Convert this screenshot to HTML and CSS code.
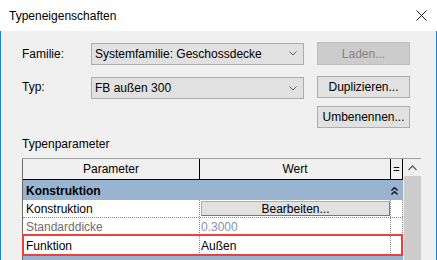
FILE: index.html
```html
<!DOCTYPE html>
<html lang="de">
    <head>
        <meta charset="UTF-8" />
        <title>Typeneigenschaften</title>
        <link rel="stylesheet" href="styles.css">
    </head>
    <body>
        <div class="dialog">
            <div class="titlebar">
                <span>Typeneigenschaften</span>
                <svg class="close" width="11" height="11" viewBox="0 0 11 11">
                    <path d="M0.5 0.5 L10.5 10.5 M10.5 0.5 L0.5 10.5" stroke="#1a1a1a" stroke-width="1" fill="none"/>
                </svg>
            </div>
            <div class="content">
                <div class="row first">
                    <span class="label">Familie:</span>
                    <div class="select">
                        <span>Systemfamilie: Geschossdecke</span>
                        <svg width="8" height="5" viewBox="0 0 8 5"><path d="M0.5 0.5 L4 4 L7.5 0.5" stroke="#606060" fill="none"/></svg>
                    </div>
                    <div class="btn disabled">Laden...</div>
                </div>
                <div class="row second">
                    <span class="label">Typ:</span>
                    <div class="select">
                        <span>FB außen 300</span>
                        <svg width="8" height="5" viewBox="0 0 8 5"><path d="M0.5 0.5 L4 4 L7.5 0.5" stroke="#606060" fill="none"/></svg>
                    </div>
                    <div class="btn">Duplizieren...</div>
                </div>
                <div class="row third">
                    <span class="label"></span>
                    <span></span>
                    <div class="btn">Umbenennen...</div>
                </div>
                <div class="caption">Typenparameter</div>
                <div class="props">
                    <div class="grid">
                        <div class="head">
                            <div class="hcell">Parameter</div>
                            <div class="hcell">Wert</div>
                            <div class="hcell eq">=</div>
                        </div>
                        <div class="group">
                            <span>Konstruktion</span>
                            <svg width="7" height="8" viewBox="0 0 7 8"><path d="M0.5 3.5 L3.5 0.5 L6.5 3.5 M0.5 7.5 L3.5 4.5 L6.5 7.5" stroke="#000" stroke-width="1.2" fill="none"/></svg>
                        </div>
                        <div class="prow">
                            <div class="cell">Konstruktion</div>
                            <div class="cell value"><div class="edit">Bearbeiten...</div></div>
                            <div class="cell eqc"></div>
                        </div>
                        <div class="prow muted">
                            <div class="cell">Standarddicke</div>
                            <div class="cell value">0.3000</div>
                            <div class="cell eqc"></div>
                        </div>
                        <div class="prow marked">
                            <div class="cell">Funktion</div>
                            <div class="cell value">Außen</div>
                            <div class="cell eqc"></div>
                        </div>
                        <div class="group"></div>
                    </div>
                    <div class="scrollbar">
                        <div class="arrow">
                            <svg width="9" height="6" viewBox="0 0 9 6"><path d="M0.5 5 L4.5 1 L8.5 5" stroke="#606060" stroke-width="1.3" fill="none"/></svg>
                        </div>
                        <div class="thumb"></div>
                    </div>
                </div>
            </div>
        </div>
    </body>
</html>
```

FILE: styles.css
```css
body {
    margin: 0;
    overflow: hidden;
}
.dialog {
    width: 437px;
    height: 260px;
    background: #f0f0f0;
    font: 12px "Liberation Sans", Arial, sans-serif;
    color: #000;
    overflow: hidden;
}
.titlebar {
    height: 31px;
    background: #fff;
    display: flex;
    align-items: center;
    justify-content: space-between;
    padding: 0 10px 0 9px;
}
.content {
    height: 229px;
    border-left: 1px solid #1883d7;
    border-right: 1px solid #1883d7;
    padding: 11px 0 0 21px;
}
.row {
    display: grid;
    grid-template-columns: 69px 213px 106px;
    align-items: center;
}
.row .btn { margin-left: 13px; }
.row.second { margin-top: 10px; }
.row.third { margin-top: 7px; }
.select {
    height: 22px;
    box-sizing: border-box;
    border: 1px solid #adadad;
    background: #e1e1e1;
    display: flex;
    align-items: center;
    justify-content: space-between;
    padding: 0 6px 0 3px;
}
.row.second .select { margin-top: 2px; }
.btn {
    height: 22px;
    box-sizing: border-box;
    border: 1px solid #adadad;
    background: #e1e1e1;
    display: flex;
    align-items: center;
    justify-content: center;
}
.btn.disabled {
    background: #cccccc;
    border-color: #bfbfbf;
    color: #838383;
    height: 23px;
}
.caption {
    margin-top: 9px;
    line-height: 15px;
}
.props {
    margin-top: 6px;
    width: 399px;
    display: flex;
    border-top: 1px solid #a0a0a0;
}
.grid {
    width: 380px;
    border-left: 1px solid #6b6b6b;
}
.head {
    display: grid;
    grid-template-columns: 177px 191px 12px;
    height: 21px;
    box-sizing: border-box;
    border-bottom: 1px solid #000;
}
.hcell {
    border-right: 1px solid #000;
    display: flex;
    align-items: center;
    justify-content: center;
}
.hcell.eq { font-size: 11px; }
.group {
    height: 20px;
    background: #99b4d1;
    display: flex;
    align-items: center;
    justify-content: space-between;
    padding: 1px 5px 0 3px;
    box-sizing: border-box;
    font-weight: bold;
}
.prow {
    display: grid;
    grid-template-columns: 177px 191px 12px;
    height: 18px;
    box-sizing: border-box;
    border-bottom: 1px dotted #8c8c8c;
    background: #fff;
}
.cell {
    border-right: 1px dotted #8c8c8c;
    display: flex;
    align-items: center;
    padding-left: 3px;
}
.cell.value { padding-left: 1px; }
.cell.eqc { padding: 0; }
.edit {
    width: 189px;
    height: 15px;
    box-sizing: border-box;
    background: #e1e1e1;
    border: 1px solid #adadad;
    border-right-color: #777;
    border-bottom-color: #777;
    display: flex;
    align-items: center;
    justify-content: center;
}
.prow.muted { color: #6d6d6d; }
.prow.muted .value { color: #8594a8; }
.prow.marked {
    height: 20px;
    position: relative;
}
.prow.marked::after {
    content: "";
    position: absolute;
    top: -2px;
    left: -1px;
    right: 0;
    bottom: -1px;
    border: 2px solid #ef3e3e;
}
.scrollbar {
    width: 17px;
    margin-left: 1px;
    display: flex;
    flex-direction: column;
}
.arrow {
    height: 17px;
    background: #f0f0f0;
    display: flex;
    align-items: center;
    justify-content: center;
}
.thumb {
    flex: 1;
    background: #cdcdcd;
}
```
